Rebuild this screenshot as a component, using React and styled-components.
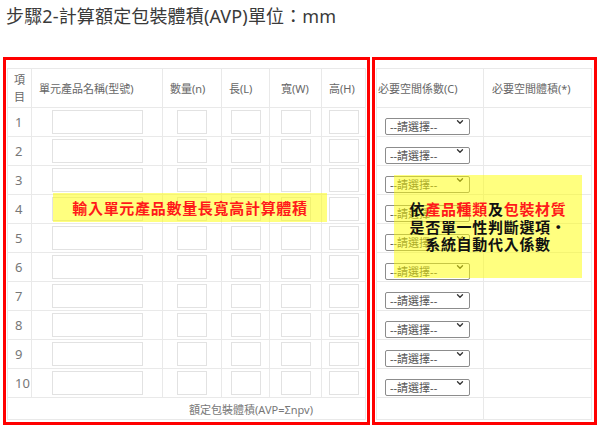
import React from "react";
import styled, { createGlobalStyle } from "styled-components";
import { ChevronDown } from "lucide-react";

const rows = [1, 2, 3, 4, 5, 6, 7, 8, 9, 10];

const App = () => {
  return (
    <>
      <GlobalStyle />
      <Page>
        <Title>步驟2-計算額定包裝體積(AVP)單位：mm</Title>
        <Panels>
          <Panel padLeft={1} padRight={1}>
            <Table width={358}>
              <colgroup>
                <col style={{ width: 24 }} />
                <col style={{ width: 131 }} />
                <col style={{ width: 59 }} />
                <col style={{ width: 48 }} />
                <col style={{ width: 52 }} />
                <col style={{ width: 44 }} />
              </colgroup>
              <thead>
                <HeadRow>
                  <HeadCell center pad={0}>
                    項<br />目
                  </HeadCell>
                  <HeadCell>單元產品名稱(型號)</HeadCell>
                  <HeadCell>數量(n)</HeadCell>
                  <HeadCell>長(L)</HeadCell>
                  <HeadCell pad={11}>寬(W)</HeadCell>
                  <HeadCell>高(H)</HeadCell>
                </HeadRow>
              </thead>
              <tbody>
                {rows.map((n) => (
                  <BodyRow key={n}>
                    <NumCell>{n}</NumCell>
                    <Cell>
                      <Field w={91} />
                    </Cell>
                    <Cell>
                      <Field w={30} />
                    </Cell>
                    <Cell>
                      <Field w={30} />
                    </Cell>
                    <Cell>
                      <Field w={30} />
                    </Cell>
                    <Cell>
                      <Field w={30} />
                    </Cell>
                  </BodyRow>
                ))}
                <FootRow>
                  <FootCell colSpan={6}>額定包裝體積(AVP=Σnpv)</FootCell>
                </FootRow>
              </tbody>
            </Table>
            <Note left={47} top={133} width={274} height={29}>
              <Red>輸入單元產品數量長寬高計算體積</Red>
            </Note>
          </Panel>

          <Panel padLeft={1} padRight={2}>
            <Table width={215}>
              <colgroup>
                <col style={{ width: 107 }} />
                <col style={{ width: 108 }} />
              </colgroup>
              <thead>
                <HeadRow>
                  <HeadCell pad={1}>必要空間係數(C)</HeadCell>
                  <HeadCell pad={8}>必要空間體積(*)</HeadCell>
                </HeadRow>
              </thead>
              <tbody>
                {rows.map((n) => (
                  <BodyRow key={n}>
                    <SelectCell>
                      <SelectWrap>
                        <Select defaultValue="">
                          <option value="">--請選擇--</option>
                        </Select>
                        <Chevron>
                          <ChevronDown size={10} strokeWidth={3.2} />
                        </Chevron>
                      </SelectWrap>
                    </SelectCell>
                    <Cell />
                  </BodyRow>
                ))}
                <FootRow>
                  <Cell />
                  <Cell />
                </FootRow>
              </tbody>
            </Table>
            <Note left={19} top={115} width={188} height={103} column>
              <NoteLine>
                依<Red>產品種類</Red>及<Red>包裝材質</Red>
              </NoteLine>
              <NoteLine>是否單一性判斷選項‧</NoteLine>
              <NoteLine>系統自動代入係數</NoteLine>
            </Note>
          </Panel>
        </Panels>
      </Page>
    </>
  );
};

const GlobalStyle = createGlobalStyle`
  body {
    margin: 0;
    background: #ffffff;
    font-family: "Noto Sans", "Noto Sans CJK TC", sans-serif;
  }
`;

const Page = styled.div`
  padding: 4px 0 0 3px;
`;

const Title = styled.h1`
  margin: 0 0 29px 3px;
  font-size: 18px;
  line-height: 24px;
  font-weight: 400;
  letter-spacing: 0.15px;
  color: #3a3a3a;
`;

const Panels = styled.div`
  display: flex;
  gap: 2px;
  align-items: flex-start;
`;

const Panel = styled.div`
  position: relative;
  border: 3px solid #ff0000;
  padding: 8px ${(p) => p.padRight}px 2px ${(p) => p.padLeft}px;
`;

const Table = styled.table`
  width: ${(p) => p.width}px;
  table-layout: fixed;
  border-collapse: collapse;
  border: 1px solid #e9e9e9;
`;

const HeadRow = styled.tr`
  height: 39px;
`;

const BodyRow = styled.tr`
  height: 29px;
`;

const FootRow = styled.tr`
  height: 22px;
`;

const HeadCell = styled.th`
  border: 1px solid #e9e9e9;
  padding: 0 0 0 ${(p) => (p.pad === undefined ? 7 : p.pad)}px;
  text-align: ${(p) => (p.center ? "center" : "left")};
  vertical-align: middle;
  font-size: 11px;
  line-height: 17px;
  font-weight: 400;
  color: #666;
  white-space: nowrap;
`;

const Cell = styled.td`
  border: 1px solid #e9e9e9;
  padding: 0;
  vertical-align: middle;
`;

const NumCell = styled(Cell)`
  padding-left: 7px;
  font-size: 13px;
  color: #777;
`;

const SelectCell = styled(Cell)`
  padding-left: 8px;
`;

const FootCell = styled(Cell)`
  text-align: right;
  padding-right: 52px;
  font-size: 11px;
  color: #777;
`;

const Field = styled.input`
  display: block;
  box-sizing: border-box;
  width: ${(p) => p.w}px;
  height: 24px;
  margin: 0 auto;
  border: 1px solid #e2e2e2;
  background: #fff;
  outline: none;
`;

const SelectWrap = styled.div`
  position: relative;
  width: 85px;
  height: 17px;
`;

const Select = styled.select`
  appearance: none;
  box-sizing: border-box;
  width: 85px;
  height: 17px;
  margin: 0;
  padding: 0 0 0 4px;
  border: 1px solid #8c8c8c;
  border-radius: 2px;
  background: #fff;
  font-family: "Noto Sans", "Noto Sans CJK TC", sans-serif;
  font-size: 11px;
  line-height: 15px;
  color: #555;
`;

const Chevron = styled.span`
  position: absolute;
  right: 5px;
  top: 3px;
  display: flex;
  color: #333;
  pointer-events: none;
`;

const Note = styled.div`
  position: absolute;
  left: ${(p) => p.left}px;
  top: ${(p) => p.top}px;
  width: ${(p) => p.width}px;
  height: ${(p) => p.height}px;
  display: flex;
  flex-direction: ${(p) => (p.column ? "column" : "row")};
  align-items: center;
  justify-content: center;
  background: rgba(255, 255, 0, 0.5);
  font-family: "Noto Sans CJK TC", sans-serif;
  font-size: 15px;
  font-weight: 700;
  letter-spacing: 0.7px;
  color: #111;
`;

const NoteLine = styled.div`
  line-height: 17.5px;
`;

const Red = styled.span`
  color: #ff1a1a;
`;

export default App;
